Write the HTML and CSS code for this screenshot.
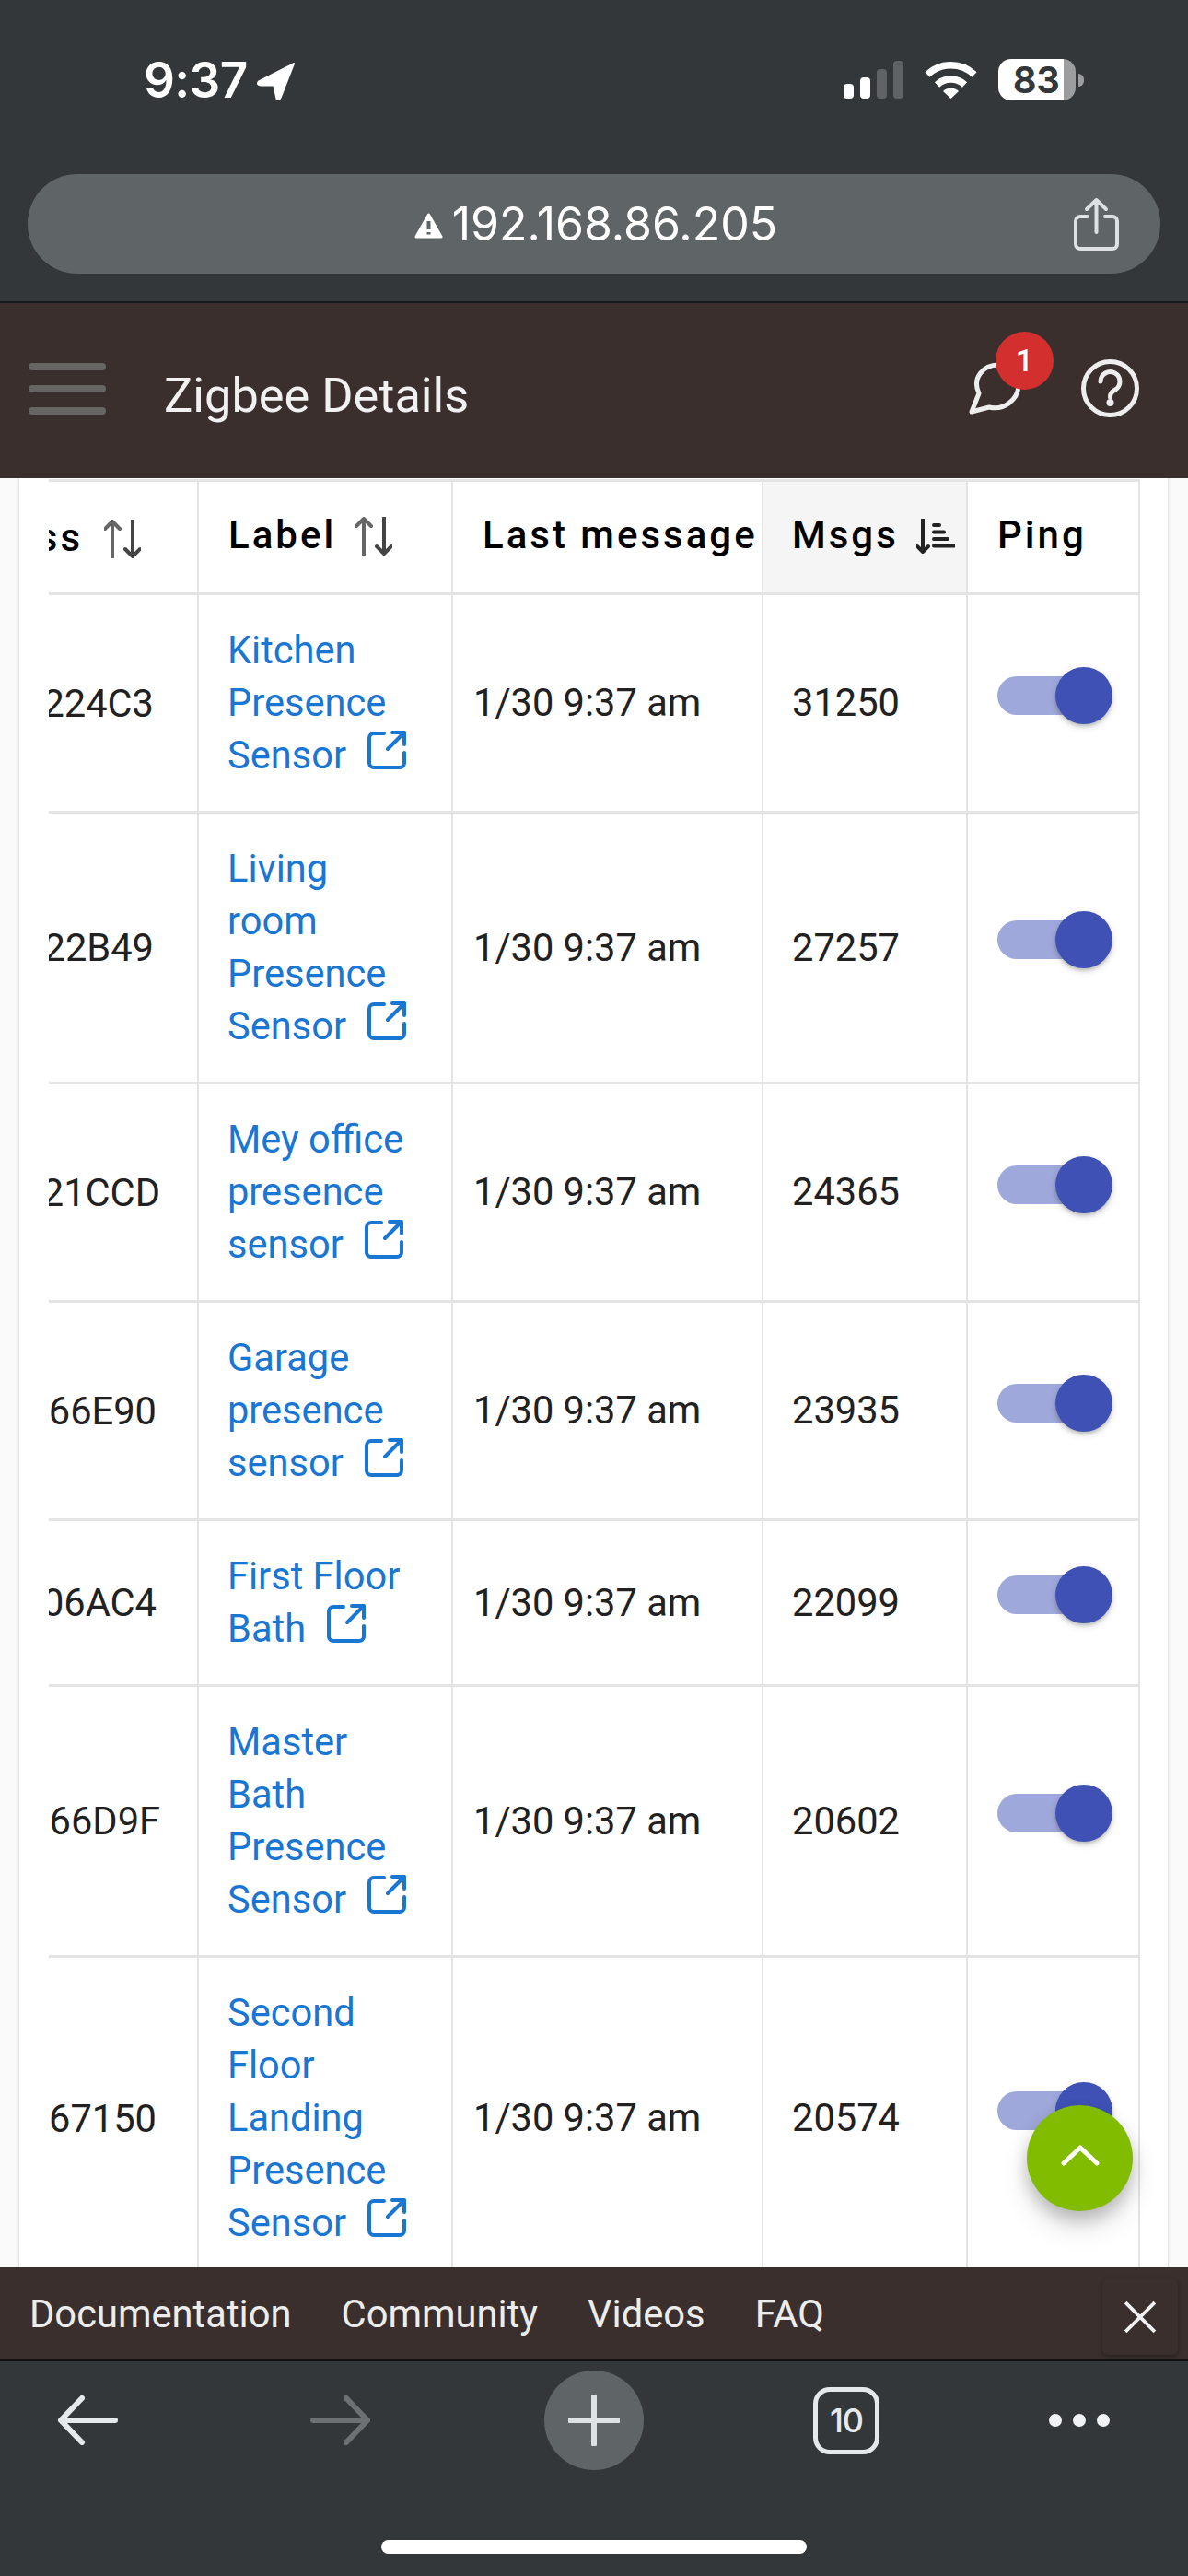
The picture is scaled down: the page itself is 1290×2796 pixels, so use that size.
FILE: index.html
```html
<!DOCTYPE html>
<html lang="en">
<head>
<meta charset="utf-8">
<title>Zigbee Details</title>
<link rel="stylesheet" href="styles.css">
</head>
<body>
<div class="phone">
  <div class="chrome-top">
    <div class="status">
      <div class="clock">
        <span class="time">9:37</span>
        <svg class="loc" viewBox="0 0 41 40"><path d="M39 1 L2 20 Q-1 23 4 24 L18 24 L21 38 Q23 41 25 37 Z"/></svg>
      </div>
      <div class="indicators">
        <div class="signal"><i class="b1"></i><i class="b2"></i><i class="b3"></i><i class="b4"></i></div>
        <svg class="wifi" viewBox="0 0 57 42"><path class="arc" d="M3 16 A37 37 0 0 1 54 16"/><path class="arc" d="M13.500 27 A22 22 0 0 1 43.500 27"/><path d="M20 34 A12 12 0 0 1 37 34 L28.500 42 Z"/></svg>
        <div class="battery"><span class="batt-body">83</span><i class="batt-nub"></i></div>
      </div>
    </div>
    <div class="urlbar">
      <div class="url">
        <svg class="warn" viewBox="0 0 31 28"><path class="warn-tri" d="M15.500 2 L29 26 H2 Z"/><path class="warn-mark" d="M15.500 9 V18 M15.500 21 V23.500"/></svg>
        <span>192.168.86.205</span>
      </div>
      <svg class="share" viewBox="0 0 49 58"><path d="M15 21 H7 a5 5 0 0 0 -5 5 V51 a5 5 0 0 0 5 5 H42 a5 5 0 0 0 5 -5 V26 a5 5 0 0 0 -5 -5 H34"/><path d="M24.500 38 V3 M14 13 L24.500 3 L35 13"/></svg>
    </div>
  </div>

  <header class="appbar">
    <div class="burger"><i></i><i></i><i></i></div>
    <h1 class="title">Zigbee Details</h1>
    <div class="app-actions">
      <div class="chat">
        <svg viewBox="0 0 58 58"><path d="M11 35 C3 18 16 4 32 4 C46 4 55 15 54 27 C53 42 38 54 22 50 L3 55 Z"/></svg>
        <span class="badge">1</span>
      </div>
      <svg class="help" viewBox="0 0 63 63"><circle cx="31.500" cy="31.500" r="29"/><path d="M21 24 a10.500 10.500 0 1 1 16 9 c-4 2.500 -5.500 4 -5.500 8"/><circle class="dot" cx="31.500" cy="47" r="4"/></svg>
    </div>
  </header>

  <main class="page">
    <div class="card">
      <table class="grid">
        <colgroup><col class="c1"><col class="c2"><col class="c3"><col class="c4"><col class="c5"></colgroup>
        <thead>
          <tr>
            <th class="addr"><div class="addr-inner end-h"><span>Address</span>
              <svg class="sort" viewBox="0 0 40 42"><path class="up" d="M9 41 V2 M1 10 L9 2 L17 10"/><path class="down" d="M31 1 V40 M23 32 L31 40 L39 32"/></svg></div></th>
            <th><div class="head"><span>Label</span>
              <svg class="sort" viewBox="0 0 40 42"><path class="up" d="M9 41 V2 M1 10 L9 2 L17 10"/><path class="down" d="M31 1 V40 M23 32 L31 40 L39 32"/></svg></div></th>
            <th>Last message</th>
            <th class="sorted"><div class="head"><span>Msgs</span>
              <svg class="sort-desc" viewBox="0 0 42 38"><path class="dark" d="M7 1 V36 M1 30 L7 36 L13 30"/><path class="dark thin" d="M19 7 H25 M19 14.500 H30 M19 22 H34 M19 29.500 H41"/></svg></div></th>
            <th>Ping</th>
          </tr>
        </thead>
        <tbody>
          <tr><td class="addr"><div class="addr-inner end-a">224C3</div></td><td class="label"><a href="#">Kitchen Presence <span class="keep">Sensor<svg class="ext" viewBox="0 0 42 42"><path d="M18 3 H7 a5 5 0 0 0 -5 5 V35 a5 5 0 0 0 5 5 H35 a5 5 0 0 0 5 -5 V24 M27 2 H40 V15 M40 2 L22 20"/></svg></span></a></td><td class="when">1/30 9:37 am</td><td class="num">31250</td><td class="ping"><span class="switch"><i class="track"></i><i class="thumb"></i></span></td></tr>
          <tr><td class="addr"><div class="addr-inner end-a">22B49</div></td><td class="label"><a href="#">Living room Presence <span class="keep">Sensor<svg class="ext" viewBox="0 0 42 42"><path d="M18 3 H7 a5 5 0 0 0 -5 5 V35 a5 5 0 0 0 5 5 H35 a5 5 0 0 0 5 -5 V24 M27 2 H40 V15 M40 2 L22 20"/></svg></span></a></td><td class="when">1/30 9:37 am</td><td class="num">27257</td><td class="ping"><span class="switch"><i class="track"></i><i class="thumb"></i></span></td></tr>
          <tr><td class="addr"><div class="addr-inner end-b">21CCD</div></td><td class="label"><a href="#">Mey office presence <span class="keep">sensor<svg class="ext" viewBox="0 0 42 42"><path d="M18 3 H7 a5 5 0 0 0 -5 5 V35 a5 5 0 0 0 5 5 H35 a5 5 0 0 0 5 -5 V24 M27 2 H40 V15 M40 2 L22 20"/></svg></span></a></td><td class="when">1/30 9:37 am</td><td class="num">24365</td><td class="ping"><span class="switch"><i class="track"></i><i class="thumb"></i></span></td></tr>
          <tr><td class="addr"><div class="addr-inner end-c">66E90</div></td><td class="label"><a href="#">Garage presence <span class="keep">sensor<svg class="ext" viewBox="0 0 42 42"><path d="M18 3 H7 a5 5 0 0 0 -5 5 V35 a5 5 0 0 0 5 5 H35 a5 5 0 0 0 5 -5 V24 M27 2 H40 V15 M40 2 L22 20"/></svg></span></a></td><td class="when">1/30 9:37 am</td><td class="num">23935</td><td class="ping"><span class="switch"><i class="track"></i><i class="thumb"></i></span></td></tr>
          <tr><td class="addr"><div class="addr-inner end-c">06AC4</div></td><td class="label"><a href="#">First Floor <span class="keep">Bath<svg class="ext" viewBox="0 0 42 42"><path d="M18 3 H7 a5 5 0 0 0 -5 5 V35 a5 5 0 0 0 5 5 H35 a5 5 0 0 0 5 -5 V24 M27 2 H40 V15 M40 2 L22 20"/></svg></span></a></td><td class="when">1/30 9:37 am</td><td class="num">22099</td><td class="ping"><span class="switch"><i class="track"></i><i class="thumb"></i></span></td></tr>
          <tr><td class="addr"><div class="addr-inner end-b">66D9F</div></td><td class="label"><a href="#">Master Bath Presence <span class="keep">Sensor<svg class="ext" viewBox="0 0 42 42"><path d="M18 3 H7 a5 5 0 0 0 -5 5 V35 a5 5 0 0 0 5 5 H35 a5 5 0 0 0 5 -5 V24 M27 2 H40 V15 M40 2 L22 20"/></svg></span></a></td><td class="when">1/30 9:37 am</td><td class="num">20602</td><td class="ping"><span class="switch"><i class="track"></i><i class="thumb"></i></span></td></tr>
          <tr><td class="addr"><div class="addr-inner end-c">67150</div></td><td class="label"><a href="#">Second Floor Landing Presence <span class="keep">Sensor<svg class="ext" viewBox="0 0 42 42"><path d="M18 3 H7 a5 5 0 0 0 -5 5 V35 a5 5 0 0 0 5 5 H35 a5 5 0 0 0 5 -5 V24 M27 2 H40 V15 M40 2 L22 20"/></svg></span></a></td><td class="when">1/30 9:37 am</td><td class="num">20574</td><td class="ping"><span class="switch"><i class="track"></i><i class="thumb"></i></span></td></tr>
        </tbody>
      </table>
    </div>
    <button class="fab" type="button" aria-label="Back to top"><svg viewBox="0 0 42 24"><path d="M3 21 L21 4 L39 21"/></svg></button>
  </main>

  <footer class="links">
    <a href="#">Documentation</a>
    <a href="#">Community</a>
    <a href="#">Videos</a>
    <a href="#">FAQ</a>
    <div class="close"><svg viewBox="0 0 34 34"><path d="M2 2 L32 32 M32 2 L2 32"/></svg></div>
  </footer>

  <nav class="chrome-bottom">
    <div class="tools">
      <svg class="nav-arrow" viewBox="0 0 66 54"><path d="M63 27 H4 M27 3 L4 27 L27 51"/></svg>
      <svg class="nav-arrow off" viewBox="0 0 66 54"><path d="M3 27 H62 M39 3 L62 27 L39 51"/></svg>
      <div class="plus"><svg viewBox="0 0 56 56"><path d="M28 2 V54 M2 28 H54"/></svg></div>
      <div class="tabs">10</div>
      <div class="more"><i></i><i></i><i></i></div>
    </div>
    <div class="home"></div>
  </nav>
</div>
</body>
</html>
```
FILE: styles.css
```css
* { box-sizing: border-box; }
html, body { margin: 0; padding: 0; }
body { font-family: Roboto, "Liberation Sans", sans-serif; background: #33373a; }
.phone { width: 1290px; height: 2796px; display: flex; flex-direction: column; overflow: hidden; }

.chrome-top { height: 327px; background: #33373a; flex: none; padding-top: 64px; }
.status { height: 125px; display: flex; justify-content: space-between; align-items: flex-start; padding: 0 113px 0 156px; }
.clock { display: flex; align-items: flex-start; gap: 10px; }
.time { font-family: Inter, sans-serif; font-weight: 600; font-size: 53px; line-height: 46px; color: #fff; letter-spacing: -.6px; }
.loc { width: 42px; height: 41px; margin-top: 4px; fill: #fff; stroke: #fff; stroke-width: 2; stroke-linejoin: round; }
.indicators { display: flex; align-items: flex-start; }
.signal { display: flex; align-items: flex-end; gap: 7px; height: 41px; margin-top: 2px; width: 65px; }
.signal i { width: 11px; border-radius: 4px; background: #fff; display: block; }
.signal .b1 { height: 16px; }
.signal .b2 { height: 23px; }
.signal .b3 { height: 32px; background: #5f6366; }
.signal .b4 { height: 41px; background: #5f6366; }
.wifi { width: 57px; height: 42px; margin: 1px 0 0 23px; fill: #fff; }
.wifi .arc { fill: none; stroke: #fff; stroke-width: 7.500; }
.battery { display: flex; align-items: center; margin-left: 23px; }
.batt-body { width: 84px; height: 45px; border-radius: 14px; background: linear-gradient(90deg, #fff 0 84%, #9c9d9e 84% 100%); color: #33373a; font-family: Inter, sans-serif; font-weight: 700; font-size: 39px; line-height: 45px; padding-left: 16px; letter-spacing: 0; }
.batt-nub { width: 6px; height: 14px; margin-left: 3px; border-radius: 0 7px 7px 0; background: #9c9d9e; display: block; }

.urlbar { margin: 0 30px; height: 108px; border-radius: 54px; background: #5f6467; display: flex; align-items: center; position: relative; padding-right: 45px; }
.url { flex: 1; display: flex; align-items: center; justify-content: center; gap: 10px; color: #fff; font-family: Inter, sans-serif; font-size: 50px; line-height: 60px; padding-left: 98px; }
.warn { width: 31px; height: 28px; margin-top: 4px; }
.warn-tri { fill: #fff; stroke: #fff; stroke-width: 3; stroke-linejoin: round; }
.warn-mark { fill: none; stroke: #5f6467; stroke-width: 4; }
.share { width: 49px; height: 58px; fill: none; stroke: #dde1e4; stroke-width: 4; stroke-linecap: round; stroke-linejoin: round; }

.appbar { height: 192px; flex: none; background: #3a2f2d; border-top: 2px solid #17191a; display: flex; align-items: center; padding: 0 53px 0 31px; }
.burger { display: flex; flex-direction: column; gap: 16px; width: 84px; margin-top: -5px; }
.burger i { display: block; height: 8px; border-radius: 4px; background: #676564; }
.title { margin: 10px 0 0 63px; font-size: 52.300px; font-weight: 400; color: #f1f1f1; line-height: 60px; flex: 1; }
.app-actions { display: flex; align-items: flex-start; margin-top: -6px; }
.chat { position: relative; width: 58px; height: 58px; margin-top: 2px; }
.chat svg { width: 58px; height: 58px; fill: none; stroke: #eee; stroke-width: 5; stroke-linejoin: round; display: block; }
.badge { position: absolute; left: 29px; top: -32px; width: 63px; height: 63px; border-radius: 50%; background: #d32f2f; color: #fff; font-size: 34px; font-weight: 500; line-height: 63px; text-align: center; }
.help { width: 63px; height: 63px; margin-left: 64px; fill: none; stroke: #eee; stroke-width: 5; stroke-linecap: round; }
.help .dot { fill: #eee; stroke: none; }

.page { flex: 1; min-height: 0; position: relative; overflow: hidden; background: #fafafa; padding: 0 21px 0 20px; }
.card { height: 100%; background: #fff; border-left: 1px solid #e6e6e6; border-right: 1px solid #e6e6e6; box-shadow: 0 0 4px rgba(0, 0, 0, .08); padding: 1px 0 0 32px; overflow: hidden; }
.grid { width: 1185px; table-layout: fixed; border-collapse: separate; border-spacing: 0; border-top: 3px solid #e4e4e4; font-size: 41.600px; color: #212121; }
.c1 { width: 163px; } .c2 { width: 276px; } .c3 { width: 337px; } .c4 { width: 222px; } .c5 { width: 187px; }
th, td { border-right: 2px solid #e4e4e4; border-bottom: 3px solid #e4e4e4; text-align: left; vertical-align: middle; }
th { height: 123px; font-size: 42px; font-weight: 500; color: #000; padding: 0 0 6px 32px; letter-spacing: 3px; white-space: nowrap; }
td { padding: 31px 0 32px 22px; line-height: 57px; white-space: normal; }
.sorted { background: #f5f5f5; padding-left: 31px; }
.head { display: flex; align-items: center; gap: 21px; }
.sorted .head { gap: 24px; }
.addr { padding: 0; overflow: hidden; white-space: nowrap; }
.addr-inner { display: flex; justify-content: flex-end; align-items: center; }
.end-h { gap: 23px; padding-right: 61px; }
.end-a { padding-right: 47px; }
.end-b { padding-right: 40px; }
.end-c { padding-right: 44px; }
.label { padding-left: 31px; padding-right: 32px; }
.label a { color: #1976d2; text-decoration: none; }
.keep { white-space: nowrap; }
.ext { width: 42px; height: 42px; margin-left: 23px; vertical-align: -1px; fill: none; stroke: #1976d2; stroke-width: 4; stroke-linecap: round; stroke-linejoin: round; }
.when { white-space: nowrap; }
.num { padding-left: 31px; }
.sort { width: 40px; height: 42px; fill: none; stroke-width: 4; stroke-linecap: round; stroke-linejoin: round; flex: none; margin-top: 4px; }
.sort .up { stroke: #666; }
.sort .down { stroke: #444; }
.sort-desc { width: 42px; height: 38px; fill: none; margin-top: 4px; margin-left: -5px; flex: none; }
.sort-desc .dark { stroke: #222; stroke-width: 4; stroke-linecap: round; stroke-linejoin: round; }
.ping { padding-left: 32px; }
.switch { display: block; position: relative; width: 126px; height: 62px; margin-bottom: 16px; }
.track { position: absolute; left: 0; top: 10px; width: 102px; height: 42px; border-radius: 21px; background: #9fa8da; }
.thumb { position: absolute; left: 63px; top: 0; width: 62px; height: 62px; border-radius: 50%; background: #3f51b5; box-shadow: 0 3px 4px -1px rgba(0, 0, 0, .2), 0 3px 8px rgba(0, 0, 0, .14); }

.fab { position: absolute; left: 1115px; bottom: 61px; width: 115px; height: 115px; border: 0; border-radius: 50%; background: #81bc00; padding: 0; display: flex; align-items: center; justify-content: center; box-shadow: 0 9px 17px rgba(0, 0, 0, .2), 0 18px 30px rgba(0, 0, 0, .12); }
.fab svg { width: 42px; height: 24px; margin-top: -8px; fill: none; stroke: #fff; stroke-width: 5; stroke-linecap: round; stroke-linejoin: round; }

.links { height: 100px; flex: none; background: #3a2f2d; display: flex; align-items: center; gap: 54px; padding: 2px 0 0 32px; position: relative; }
.links a { color: #ececec; text-decoration: none; font-size: 41.700px; line-height: 50px; }
.close { position: absolute; left: 1197px; top: 12px; width: 82px; height: 83px; background: #3a2f2d; border-radius: 6px; box-shadow: 0 2px 4px rgba(0, 0, 0, .3); display: flex; align-items: center; justify-content: center; }
.close svg { width: 36px; height: 36px; fill: none; stroke: #f1f1f1; stroke-width: 3.500; }

.chrome-bottom { flex: none; height: 235px; background: #33373a; border-top: 2px solid #111; display: flex; flex-direction: column; align-items: center; }
.tools { width: 100%; display: flex; align-items: center; padding: 0 0 0 62px; height: 128px; }
.nav-arrow { width: 66px; height: 54px; fill: none; stroke: #e6e9eb; stroke-width: 6; stroke-linecap: round; stroke-linejoin: round; flex: none; }
.nav-arrow.off { stroke: #6e7174; margin-left: 209px; }
.plus { width: 108px; height: 108px; margin-left: 188px; border-radius: 50%; background: #5f6467; display: flex; align-items: center; justify-content: center; flex: none; }
.plus svg { width: 56px; height: 56px; fill: none; stroke: #dfe2e5; stroke-width: 6; stroke-linecap: round; }
.tabs { width: 72px; height: 73px; margin-left: 184px; border: 5px solid #e6e9eb; border-radius: 18px; color: #e6e9eb; font-family: Inter, sans-serif; font-size: 36px; font-weight: 500; line-height: 63px; text-align: center; letter-spacing: -1px; flex: none; }
.more { display: flex; gap: 12px; margin-left: 184px; flex: none; }
.more i { display: block; width: 14px; height: 14px; border-radius: 50%; background: #f0f2f3; }
.home { width: 462px; height: 15px; border-radius: 8px; background: #fff; margin-top: 66px; }
```
